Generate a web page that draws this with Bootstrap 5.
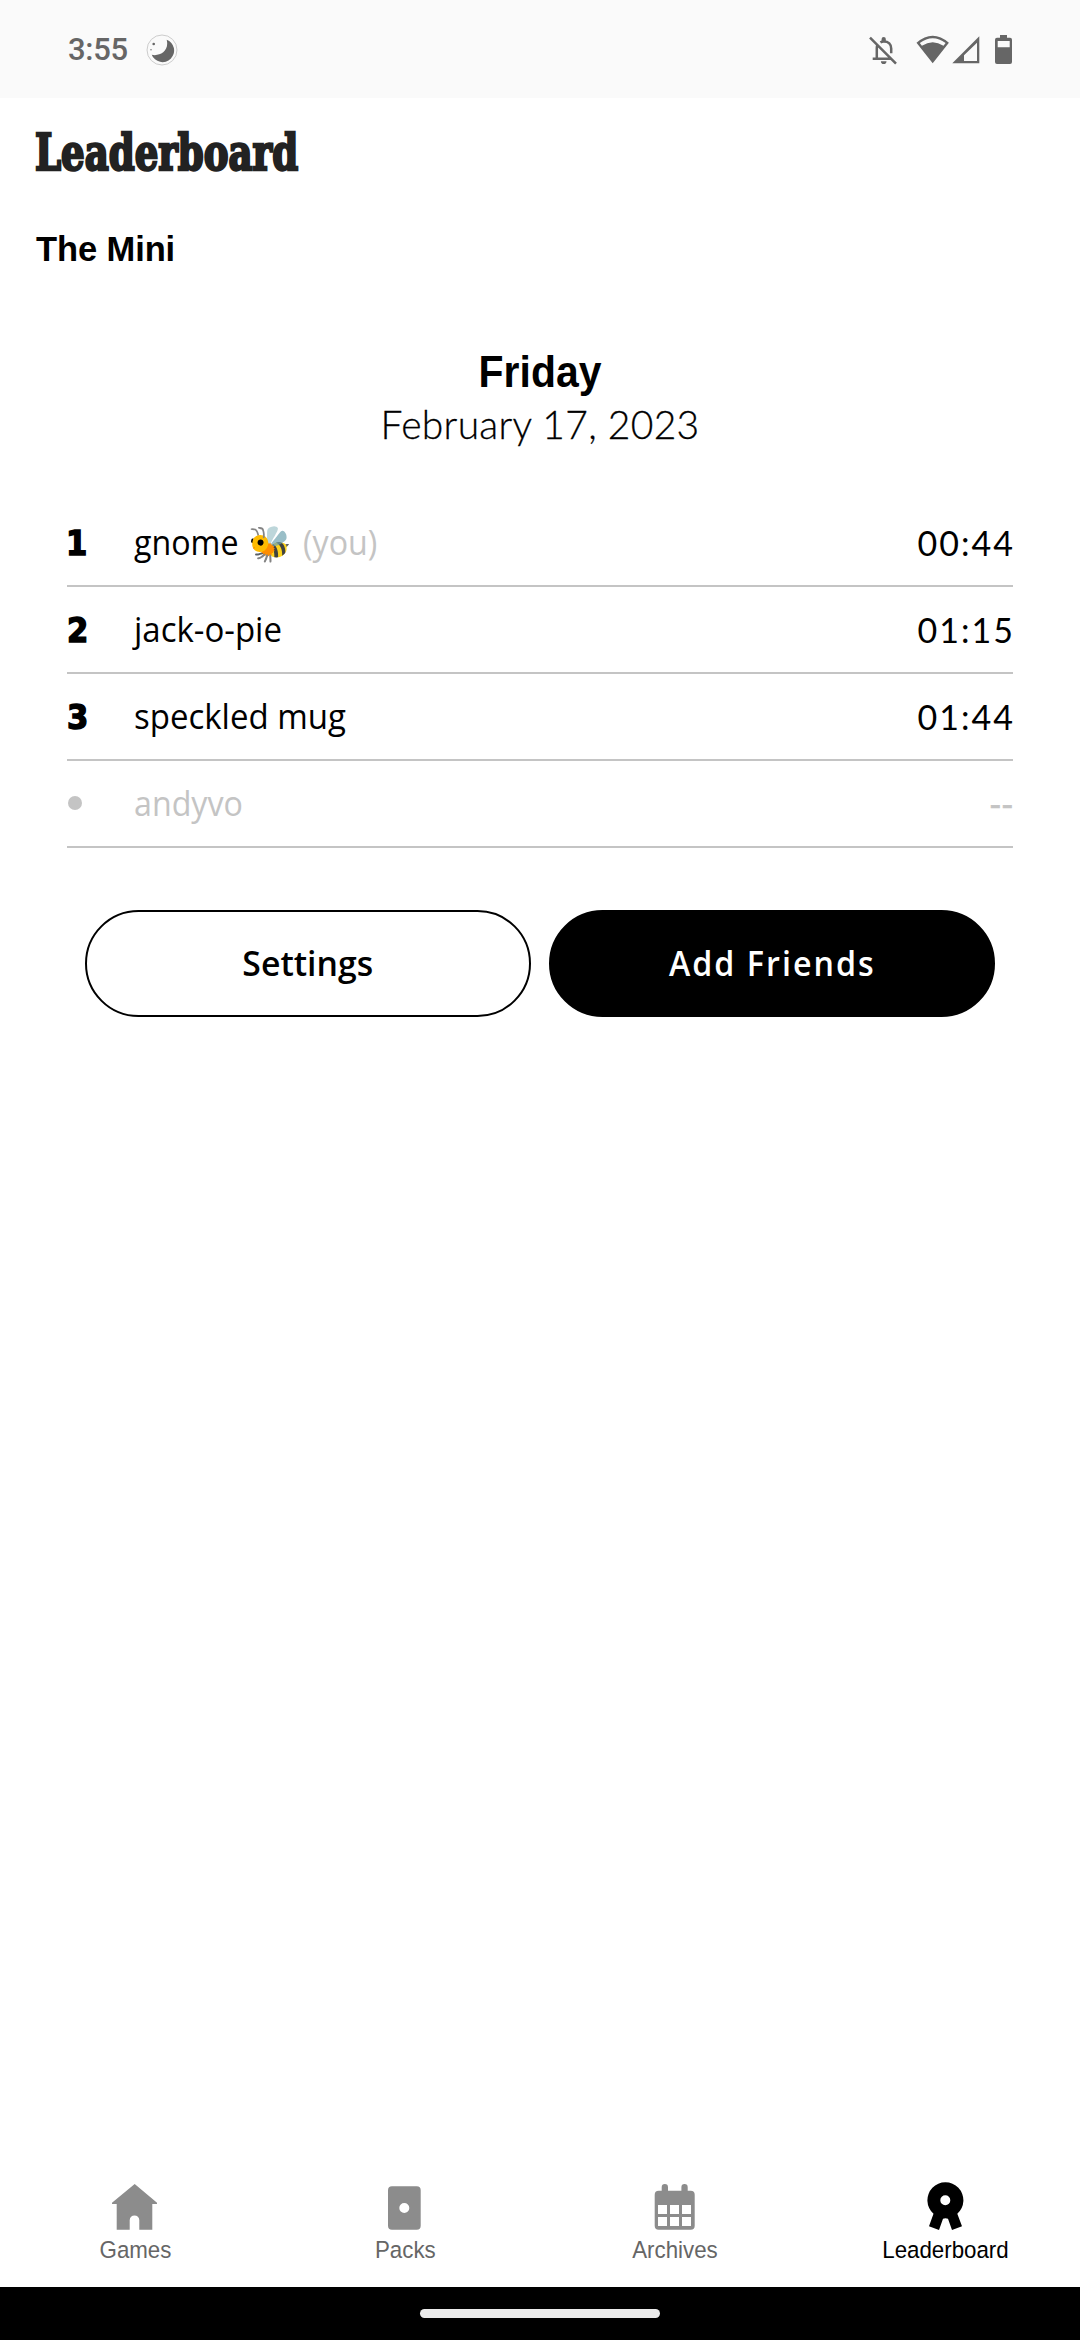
<!DOCTYPE html>
<html lang="en">
<head>
<meta charset="utf-8">
<meta name="viewport" content="width=device-width, initial-scale=1">
<title>Leaderboard</title>
<link href="https://cdn.jsdelivr.net/npm/bootstrap@5.3.0/dist/css/bootstrap.min.css" rel="stylesheet">
<style>
body{font-family:"Open Sans","Noto Sans",sans-serif;color:#000;background:#fff;height:2340px;overflow:hidden}
.sys-bar{height:98px;background:#fafafa;color:#666;padding:2px 66px 0 68px}
.sys-time{font:500 31px/40px Roboto,sans-serif;letter-spacing:-.3px;width:78px}
.sqz{display:inline-block;white-space:nowrap;transform-origin:0 50%}
.page-title{font:700 50px/60px "DejaVu Serif Condensed","DejaVu Serif",serif;color:#222;padding:25px 0 0 35px;margin:0;-webkit-text-stroke:2.4px #222}
.page-title .sqz{transform:scaleX(.825)}
.puzzle{font:700 34.5px/40px "Liberation Sans",sans-serif;margin:46px 0 0;padding-left:36px;letter-spacing:-.1px}
.day{font:700 44px/56px "Liberation Sans",sans-serif;margin:75px 0 0}
.day .sqz{transform:scaleX(.93);transform-origin:50% 50%}
.full-date{font:300 39px/48px Lato,sans-serif;letter-spacing:.28px;margin:0;-webkit-text-stroke:.3px #000}
.scores{margin:52px 67px 0}
.score-row{height:87px;border-bottom:2px solid #c4c4c4;font-size:35px}
.rank{width:67px;font:700 34px/40px "DejaVu Sans Condensed","DejaVu Sans",sans-serif;-webkit-text-stroke:1.4px #000}
.rank-one{margin-left:-1px}
.dot{display:block;width:14px;height:14px;border-radius:50%;background:#c4c4c4;margin:0 0 2px 1px}
.who .sqz{transform:scaleX(.943)}
.first-name{width:104px}
.first-name .sqz,.you .sqz,.score-row.idle .sqz{transform:scaleX(.92)}
.bee{font-size:35px;line-height:40px;width:46px;margin-left:6px}
.you{color:#c4c4c4;margin-left:13px}
.clock{font:400 34px/40px Lato,sans-serif;letter-spacing:2px;margin-right:-2px}
.idle,.idle .clock{color:#c4c4c4}
.idle .clock{letter-spacing:-.6px;margin-right:0;-webkit-text-stroke:.6px #c4c4c4}
.actions{margin:62px 85px 0;gap:18px}
.pill{height:107px;border-radius:54px;border:2px solid #000;font-size:35px;font-weight:600;padding:0 0 1px;flex:1 1 0}
.pill:first-child .sqz{transform:scaleX(.965);transform-origin:50% 50%}
.pill:last-child .sqz{transform:scaleX(.92);transform-origin:50% 50%;letter-spacing:2.2px}
.tabs{height:127px;padding-top:20px}
.tab{font:400 24.5px/28px "Liberation Sans",sans-serif;color:#666;flex:1 1 0}
.tab svg{width:52px;height:52px;fill:#8c8c8c;margin-bottom:4px}
.tab .sqz{transform:scaleX(.91);transform-origin:50% 50%}
.tab.on{color:#000}
.tab.on svg{fill:#000}
.gesture{height:53px;background:#000}
.gesture span{width:240px;height:9px;border-radius:5px;background:#ebebeb}
</style>
</head>
<body class="d-flex flex-column">
<header class="sys-bar d-flex align-items-center">
  <span class="sys-time">3:55</span>
  <svg width="32" height="32" viewBox="145.3 34.3 32 32"><circle cx="161.3" cy="50.3" r="15" fill="none" stroke="#ccc"/><path d="M166 40A11.6 11.6 0 1 1 151 55C158 57 169 52 166 40Z" fill="#666"/><circle cx="153" cy="44.3" r="1.3" fill="#666"/><circle cx="150.3" cy="50" r=".7" fill="#666"/></svg>
  <div class="d-flex ms-auto">
    <svg width="46" height="32" viewBox="0 0 46 32"><g fill="none" stroke="#666" stroke-width="2.5"><path d="M2 3.7 28 29.7M4.7 24.8H23.5M8.8 24.7V14Q8.8 12 9.8 10.4M12.4 8.4Q14 7.4 15.8 7.4C20.5 7.4 23.2 10.5 23.2 14.5V19.2"/></g><path d="M13.6 7V5a2.1 2.1 0 0 1 4.2 0v2ZM12.9 27.3h5.6a2.8 2.8 0 0 1-5.6 0Z" fill="#666"/></svg>
    <svg width="36" height="32" viewBox="0 0 36 32"><path fill="#666" fill-rule="evenodd" d="M18.7 29.3 2.5 8.7Q18.7-5.3 34.9 8.7ZM5.8 9 7.9 11.8Q18.7 4.8 29.5 11.8L31.6 9Q18.7-.6 5.8 9Z"/></svg>
    <svg width="43" height="32" viewBox="0 0 43 32"><path fill="#666" fill-rule="evenodd" d="M2.3 29.3 29.3 2.3V29.3ZM14 21.3V27H27V8.7Z"/></svg>
    <svg width="21" height="32" viewBox="0 1 21 32"><path fill="#666" fill-rule="evenodd" d="M7 4.7V2h7v2.7h3a2 2 0 0 1 2 2V29a2 2 0 0 1-2 2H4a2 2 0 0 1-2-2V6.7a2 2 0 0 1 2-2ZM4.7 8v6.3h12V8Z"/></svg>
  </div>
</header>

<main class="flex-grow-1">
  <h1 class="page-title"><span class="sqz">Leaderboard</span></h1>
  <h2 class="puzzle">The Mini</h2>
  <section class="text-center">
    <p class="day"><span class="sqz">Friday</span></p>
    <p class="full-date">February 17, 2023</p>
  </section>
  <section class="scores">
    <div class="score-row d-flex align-items-center">
      <span class="rank"><span class="rank-one">1</span></span>
      <span class="who d-flex align-items-center"><span class="first-name"><span class="sqz">gnome</span></span><span class="bee ps-1">🐝</span><span class="you"><span class="sqz">(you)</span></span></span>
      <span class="clock ms-auto">00:44</span>
    </div>
    <div class="score-row d-flex align-items-center">
      <span class="rank">2</span><span class="who"><span class="sqz">jack-o-pie</span></span><span class="clock ms-auto">01:15</span>
    </div>
    <div class="score-row d-flex align-items-center">
      <span class="rank">3</span><span class="who"><span class="sqz">speckled mug</span></span><span class="clock ms-auto">01:44</span>
    </div>
    <div class="score-row idle d-flex align-items-center">
      <span class="rank"><i class="dot"></i></span><span class="who"><span class="sqz">andyvo</span></span><span class="clock ms-auto">--</span>
    </div>
  </section>
  <div class="actions d-flex">
    <button type="button" class="btn pill btn-light bg-white text-black"><span class="sqz">Settings</span></button>
    <button type="button" class="btn pill btn-dark bg-black text-white"><span class="sqz">Add Friends</span></button>
  </div>
</main>

<nav class="tabs d-flex">
  <div class="tab d-flex flex-column align-items-center"><svg viewBox="0 0 52 52"><path d="M25.7 4 48 22.8V24H43.3V49.7H30.3V40.2a4.8 4.8 0 0 0-9.6 0V49.7H7.7V24H3V22.8Z"/></svg><span class="sqz">Games</span></div>
  <div class="tab d-flex flex-column align-items-center"><svg viewBox="0 0 52 52"><path fill-rule="evenodd" d="M13 6.3H37.7a4 4 0 0 1 4 4V45.7a4 4 0 0 1-4 4H13a4 4 0 0 1-4-4V10.3a4 4 0 0 1 4-4ZM20.3 28a5 5 0 0 0 10 0a5 5 0 0 0-10 0Z"/></svg><span class="sqz">Packs</span></div>
  <div class="tab d-flex flex-column align-items-center"><svg viewBox="0 0 52 52"><path fill-rule="evenodd" d="M12.7 10.7V7.2a3.15 3.15 0 0 1 6.3 0V10.7H32.4V7.2a3.15 3.15 0 0 1 6.3 0V10.7H41.7a4 4 0 0 1 4 4V45.7a4 4 0 0 1-4 4H9.7a4 4 0 0 1-4-4V14.7a4 4 0 0 1 4-4ZM9 25v9h9v-9ZM21 25v9h9v-9ZM33 25v9h9v-9ZM9 37v9h9v-9ZM21 37v9h9v-9ZM33 37v9h9v-9Z"/></svg><span class="sqz">Archives</span></div>
  <div class="tab on d-flex flex-column align-items-center"><svg viewBox="0 0 52 52"><path fill-rule="evenodd" d="M14.5 33.8A18 18 0 1 1 38.3 33.8L43 46.3 33 50 29 38.7Q26.4 38 24 38.7L20 50 10 46.3ZM21.3 20.3a5 5 0 0 0 10 0a5 5 0 0 0-10 0Z"/></svg><span class="sqz">Leaderboard</span></div>
</nav>
<footer class="gesture d-flex justify-content-center align-items-center"><span></span></footer>
<script src="https://cdn.jsdelivr.net/npm/bootstrap@5.3.0/dist/js/bootstrap.bundle.min.js"></script>
</body>
</html>
